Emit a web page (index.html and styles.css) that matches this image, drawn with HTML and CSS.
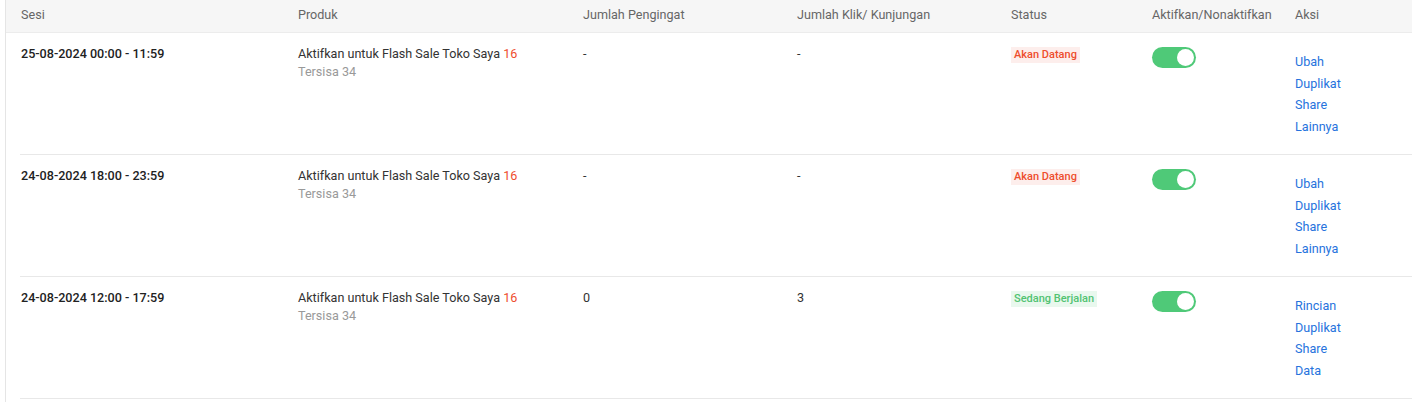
FILE: index.html
```html
<!DOCTYPE html>
<html lang="id">
<head>
<meta charset="utf-8">
<link rel="stylesheet" href="styles.css">
</head>
<body>
<div class="table">
  <div class="thead">
    <div>Sesi</div>
    <div>Produk</div>
    <div>Jumlah Pengingat</div>
    <div>Jumlah Klik/ Kunjungan</div>
    <div>Status</div>
    <div>Aktifkan/Nonaktifkan</div>
    <div>Aksi</div>
  </div>

  <div class="row">
    <div class="cell date">25-08-2024 00:00 - 11:59</div>
    <div class="cell"><div>Aktifkan untuk Flash Sale Toko Saya <span class="num">16</span></div><div class="sub">Tersisa 34</div></div>
    <div class="cell">-</div>
    <div class="cell">-</div>
    <div class="cell"><span class="badge upcoming">Akan Datang</span></div>
    <div class="cell"><span class="toggle"><span class="knob"></span></span></div>
    <div class="cell actions"><a>Ubah</a><a>Duplikat</a><a>Share</a><a>Lainnya</a></div>
  </div>

  <div class="row">
    <div class="cell date">24-08-2024 18:00 - 23:59</div>
    <div class="cell"><div>Aktifkan untuk Flash Sale Toko Saya <span class="num">16</span></div><div class="sub">Tersisa 34</div></div>
    <div class="cell">-</div>
    <div class="cell">-</div>
    <div class="cell"><span class="badge upcoming">Akan Datang</span></div>
    <div class="cell"><span class="toggle"><span class="knob"></span></span></div>
    <div class="cell actions"><a>Ubah</a><a>Duplikat</a><a>Share</a><a>Lainnya</a></div>
  </div>

  <div class="row">
    <div class="cell date">24-08-2024 12:00 - 17:59</div>
    <div class="cell"><div>Aktifkan untuk Flash Sale Toko Saya <span class="num">16</span></div><div class="sub">Tersisa 34</div></div>
    <div class="cell">0</div>
    <div class="cell">3</div>
    <div class="cell"><span class="badge ongoing">Sedang Berjalan</span></div>
    <div class="cell"><span class="toggle"><span class="knob"></span></span></div>
    <div class="cell actions"><a>Rincian</a><a>Duplikat</a><a>Share</a><a>Data</a></div>
  </div>
</div>
</body>
</html>
```

FILE: styles.css
```css
html, body {
  margin: 0;
  padding: 0;
  background: #fff;
}
body {
  font-family: Roboto, "Liberation Sans", Arial, sans-serif;
  font-size: 12.6px;
  color: #333;
}
.table {
  margin-left: 5px;
  border-left: 1px solid #e5e5e5;
  min-height: 402px;
}
.thead {
  display: grid;
  grid-template-columns: 277px 285px 214px 214px 141px 143px 1fr;
  height: 33px;
  box-sizing: border-box;
  padding-bottom: 4px;
  align-items: center;
  padding-left: 15px;
  background: #f6f6f6;
  border-bottom: 1px solid #ececec;
  color: #666;
}
.row {
  display: grid;
  grid-template-columns: 277px 285px 214px 214px 141px 143px 1fr;
  margin-left: 14px;
  padding-left: 1px;
  height: 121px;
  border-bottom: 1px solid #e8e8e8;
}
.cell {
  padding-top: 12px;
  line-height: 18px;
}
.date {
  font-weight: 500;
  color: #222;
}
.num {
  color: #ee4d2d;
}
.sub {
  color: #999;
}
.badge {
  display: inline-block;
  margin-top: 1px;
  padding: 0 3px;
  font-size: 11px;
  line-height: 16px;
  font-weight: 500;
}
.badge.upcoming {
  color: #ee4d2d;
  background: #fdeeec;
}
.badge.ongoing {
  color: #52c372;
  background: #e9f8ee;
}
.toggle {
  display: flex;
  justify-content: flex-end;
  align-items: center;
  width: 44px;
  height: 21px;
  margin-top: 2px;
  padding: 0 2px;
  box-sizing: border-box;
  border-radius: 11px;
  background: #4fc978;
}
.knob {
  width: 17px;
  height: 17px;
  border-radius: 50%;
  background: #fff;
}
.actions {
  padding-top: 18px;
  display: flex;
  flex-direction: column;
  line-height: 21.7px;
}
.actions a {
  color: #2673dd;
  cursor: pointer;
}
```
